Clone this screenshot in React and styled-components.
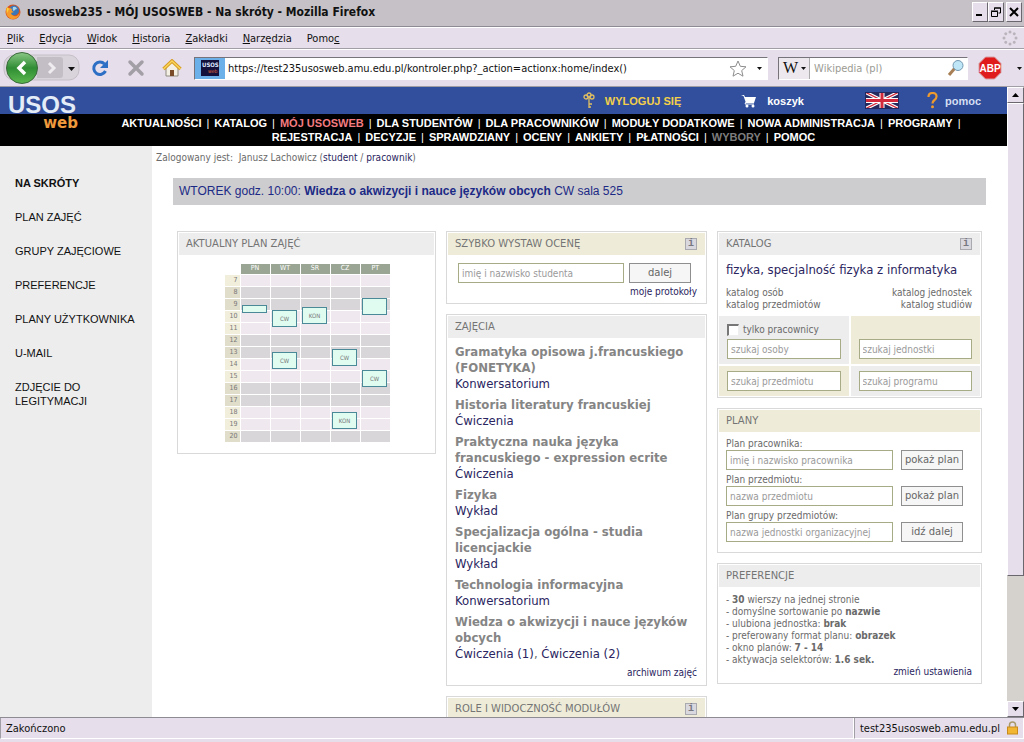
import React from 'react';
import styled, {createGlobalStyle} from 'styled-components';

const __CHROME = '#e6deea';
const __TITLE = '#c5c1c6';
const __BLUE = '#314f9c';
const __LINK = '#2a2560';
const __TEXT = '#6a6a6a';
const __MUTED = '#9a9a9a';
const __GRAY = '#ededed';
const __OLIVE = '#eeecd9';
const __BORDER = '#d9d9d9';
const __UI_FONT = "'DejaVu Sans Condensed', 'DejaVu Sans', sans-serif";
const __PAGE_FONT = "'DejaVu Sans Condensed', 'DejaVu Sans', sans-serif";
const __WIDE_FONT = "'DejaVu Sans', sans-serif";
const __ARIAL = "'Liberation Sans', Arial, sans-serif";

const GlobalStyle = createGlobalStyle`
  * {
    box-sizing: border-box;
  }
  body {
    margin: 0;
    background: #fff;
    font-family: ${__PAGE_FONT};
  }
  button, input {
    font: inherit;
    margin: 0;
  }
  a {
    color: inherit;
    text-decoration: none;
  }
`;

const Window = styled.div`
  display: flex;
  flex-direction: column;
  height: 100vh;
  overflow: hidden;
  background: ${__CHROME};
`;

const TitleBar = styled.header`
  display: flex;
  align-items: center;
  height: 27px;
  padding: 0 2px 2px 5px;
  background: ${__TITLE};
  border-bottom: 1px solid #8f8b92;
`;

const WindowTitle = styled.h1`
  flex: 1;
  margin: 0 0 0 6px;
  font-family: ${__UI_FONT};
  font-size: 12px;
  font-weight: bold;
  color: #111;
`;

const WindowButton = styled.button`
  display: flex;
  align-items: center;
  justify-content: center;
  width: 16px;
  height: 20px;
  padding: 0;
  margin-left: ${props => (props.$apart ? '2px' : 0)};
  background: ${__CHROME};
  border: 1px solid;
  border-color: #fff #6b676e #6b676e #fff;
`;

const MenuBar = styled.nav`
  display: flex;
  align-items: center;
  gap: 15px;
  height: 22px;
  padding: 0 6px 0 7px;
  border-top: 1px solid #fff;
  border-bottom: 1px solid #a29ea6;
  font-family: ${__UI_FONT};
  font-size: 11px;
`;

const MenuItem = styled.button`
  padding: 0;
  border: 0;
  background: none;
  color: #111;
`;

const Throbber = styled.svg`
  margin-left: auto;
`;

const ToolBar = styled.div`
  display: flex;
  align-items: center;
  height: 38px;
  padding: 0 2px 0 3px;
  border-top: 1px solid #fff;
  border-bottom: 1px solid #a29ea6;
  font-family: ${__UI_FONT};
  font-size: 11px;
`;

const ToolButton = styled.button`
  display: flex;
  padding: 0;
  margin-right: ${props => props.$gap || 0}px;
  border: 0;
  background: none;
`;

const Field = styled.div`
  display: flex;
  align-items: center;
  height: 23px;
  background: #fff;
  border: 1px solid;
  border-color: #77737b #fff #fff #77737b;
`;

const AddressField = styled(Field)`
  flex: 1;
  padding-right: 5px;
`;

const SearchField = styled(Field)`
  width: 190px;
  margin: 0 10px;
`;

const SiteIcon = styled.div`
  display: flex;
  flex-direction: column;
  justify-content: center;
  align-items: center;
  width: 30px;
  height: 21px;
  margin-right: 3px;
  background: #6cb0ea;
`;

const FieldInput = styled.input`
  flex: 1;
  min-width: 0;
  padding: 0;
  border: 0;
  outline: 0;
  background: none;
  color: #111;
  &::placeholder {
    color: #9b9b93;
    opacity: 1;
  }
`;

const Engine = styled.button`
  display: flex;
  align-items: center;
  gap: 3px;
  height: 21px;
  padding: 0 3px 0 4px;
  margin-right: 4px;
  border: 0;
  border-right: 1px solid #aaa;
  background: #ece8ee;
  font-family: 'Liberation Serif', serif;
  font-size: 16px;
  color: #111;
`;

const Viewport = styled.div`
  flex: 1;
  min-height: 0;
  display: flex;
`;

const Page = styled.div`
  flex: 1;
  min-width: 0;
  display: flex;
  flex-direction: column;
  overflow: hidden;
  background: #fff;
`;

const SiteHeader = styled.header`
  position: relative;
  font-family: ${__ARIAL};
  font-size: 11px;
  font-weight: bold;
  color: #fff;
`;

const Logo = styled.a`
  position: absolute;
  left: 8px;
  top: 5px;
  display: flex;
  flex-direction: column;
  width: 70px;
`;

const LogoTop = styled.span`
  font-size: 24px;
  line-height: 26px;
  color: #e4ecf8;
`;

const LogoBottom = styled.span`
  align-self: flex-end;
  font-family: ${__WIDE_FONT};
  font-size: 15px;
  line-height: 10px;
  color: #ef9a3c;
`;

const HeaderTop = styled.div`
  display: flex;
  align-items: center;
  justify-content: flex-end;
  height: 27px;
  padding-right: 26px;
  background: ${__BLUE};
`;

const HeaderLink = styled.a`
  display: flex;
  align-items: center;
  gap: ${props => props.$gap || 8}px;
  margin-right: ${props => props.$after || 0}px;
  color: ${props => props.$color || '#fff'};
`;

const SiteNav = styled.nav`
  height: 32px;
  padding: 2px 0 2px 80px;
  background: #000;
`;

const NavRow = styled.ul`
  display: flex;
  justify-content: center;
  margin: 0;
  padding: 0;
  list-style: none;
  line-height: 14px;
  white-space: nowrap;
`;

const NavItem = styled.li`
  color: ${props => props.$color || '#fff'};
  &:not(:last-child)::after,
  &[data-open]::after {
    content: '|';
    padding: 0 5px;
    color: #fff;
    font-weight: normal;
  }
`;

const Body = styled.div`
  flex: 1;
  display: flex;
  min-height: 0;
`;

const SideBar = styled.nav`
  width: 152px;
  flex-shrink: 0;
  padding: 30px 15px;
  background: ${__GRAY};
  font-family: ${__ARIAL};
  font-size: 11px;
  line-height: 14px;
  color: #111;
`;

const SideLink = styled.a`
  display: block;
  margin-bottom: 20px;
  font-weight: ${props => (props.$active ? 'bold' : 'normal')};
`;

const Main = styled.main`
  flex: 1;
  min-width: 0;
  font-size: 10px;
  line-height: 12px;
  color: ${__TEXT};
`;

const LoginInfo = styled.p`
  margin: 0;
  padding: 6px 4px;
  color: ${__TEXT};
`;

const DarkLink = styled.a`
  color: ${__LINK};
`;

const Banner = styled.div`
  margin: 8px 21px 26px;
  padding: 6px;
  background: #cdcdcf;
  font-family: ${__ARIAL};
  font-size: 12px;
  line-height: 15px;
  color: #1c2a86;
`;

const Columns = styled.div`
  display: grid;
  grid-template-columns: 259fr 261fr 265fr;
  gap: 10px;
  align-items: start;
  padding: 0 25px;
`;

const Column = styled.div`
  display: flex;
  flex-direction: column;
  gap: 10px;
`;

const Panel = styled.section`
  padding: 1px;
  border: 1px solid ${__BORDER};
`;

const PanelHead = styled.div`
  display: flex;
  align-items: center;
  justify-content: space-between;
  height: 22px;
  padding: 0 8px 0 7px;
  background: ${props => (props.$olive ? __OLIVE : __GRAY)};
`;

const PanelTitle = styled.h2`
  margin: 0;
  font-family: ${__WIDE_FONT};
  font-size: 10px;
  font-weight: normal;
  color: #747474;
`;

const InfoButton = styled.button`
  width: 12px;
  height: 12px;
  padding: 0;
  border: 1px solid #a9a9b0;
  background: #d8d8de;
  font-family: 'Liberation Mono', monospace;
  font-size: 10px;
  font-weight: bold;
  line-height: 10px;
  color: #77777f;
`;

const PlanWrap = styled.div`
  position: relative;
  width: 165px;
  margin: 9px auto 10px 46px;
`;

const PlanTable = styled.table`
  border-collapse: collapse;
  table-layout: fixed;
  width: 165px;
  font-size: 7px;
  line-height: 9px;
`;

const DayHead = styled.th`
  width: 30px;
  height: 10px;
  padding: 0;
  border-left: 1px solid #fff;
  background: ${props => (props.$empty ? '#fff' : '#9aa594')};
  background-clip: padding-box;
  font-weight: normal;
  color: #fff;
`;

const PlanCorner = styled.td`
  padding: 0;
`;

const HourHead = styled.th`
  height: 12px;
  padding: 0 2px 0 0;
  border-top: 1px solid #fff;
  background: ${props => (props.$dark ? '#e0ddca' : '#f1eedb')};
  font-weight: normal;
  text-align: right;
  color: #777;
`;

const Slot = styled.td`
  padding: 0;
  border-top: 1px solid #fff;
  border-left: 1px solid #fff;
  background: ${props => (props.$dark ? '#d8d6d9' : '#efe9ef')};
`;

const Lesson = styled.span`
  position: absolute;
  display: flex;
  align-items: center;
  justify-content: center;
  width: 25px;
  border: 1px solid #4a8a98;
  background: #e0fbf0;
  font-size: 6px;
  color: #777;
`;

const GradeForm = styled.form`
  display: flex;
  flex-wrap: wrap;
  gap: 3px 5px;
  padding: 8px 8px 4px 10px;
`;

const TextInput = styled.input`
  width: ${props => props.$width || '100%'};
  height: 20px;
  padding: 0 3px;
  border: 1px solid #a8ac86;
  background: #fff;
  color: #555;
  &::placeholder {
    color: ${__MUTED};
    opacity: 1;
  }
`;

const SubmitButton = styled.button`
  width: 62px;
  height: 20px;
  padding: 0;
  border: 1px solid #8f8f8f;
  background: #f6f6f6;
  font-family: ${__WIDE_FONT};
  color: #666;
`;

const RightLink = styled.a`
  display: block;
  width: 100%;
  text-align: right;
  color: ${__LINK};
`;

const Courses = styled.div`
  padding: 6px 8px 5px 7px;
`;

const Course = styled.div`
  margin-bottom: 5px;
  font-size: 13px;
  line-height: 16px;
`;

const CourseName = styled.h3`
  margin: 0;
  font-size: 13px;
  color: #858585;
`;

const Catalog = styled.div`
  display: flex;
  flex-wrap: wrap;
  justify-content: space-between;
  padding: 6px 8px 5px 7px;
`;

const Programme = styled.a`
  width: 100%;
  margin-bottom: 8px;
  font-size: 13px;
  line-height: 18px;
  color: ${__LINK};
`;

const LinkList = styled.div`
  display: flex;
  flex-direction: column;
  text-align: ${props => props.$align || 'left'};
`;

const SearchGrid = styled.div`
  display: grid;
  grid-template-columns: 1fr 1fr;
  gap: 2px;
`;

const SearchCell = styled.div`
  display: flex;
  flex-direction: column;
  justify-content: flex-end;
  padding: 5px 8px;
  background: ${props => (props.$olive ? __OLIVE : __GRAY)};
`;

const CheckLabel = styled.label`
  display: flex;
  align-items: center;
  gap: 4px;
  height: 18px;
`;

const CheckBox = styled.input`
  appearance: none;
  width: 12px;
  height: 12px;
  border: 1px solid;
  border-width: 2px 1px 1px 2px;
  border-color: #777 #eee #eee #777;
  background: #fff;
`;

const Plans = styled.div`
  padding: 6px 17px 5px 7px;
`;

const PlanForm = styled.form`
  display: grid;
  grid-template-columns: 1fr 62px;
  column-gap: 8px;
  margin-bottom: 4px;
`;

const PlanLabel = styled.label`
  grid-column: 1 / -1;
`;

const Prefs = styled.div`
  padding: 7px 8px 4px 7px;
`;

const PrefList = styled.ul`
  margin: 0;
  padding: 0;
  list-style: none;
`;

const ScrollBar = styled.div`
  display: flex;
  flex-direction: column;
  width: 17px;
  flex-shrink: 0;
  background: #d5d1cd;
`;

const ScrollButton = styled.button`
  display: flex;
  align-items: center;
  justify-content: center;
  height: 16px;
  padding: 0;
  border: 1px solid;
  border-color: #fff #6b676e #6b676e #fff;
  background: ${__CHROME};
`;

const ScrollThumb = styled.div`
  flex: 0 0 75%;
  margin-bottom: auto;
  border: 1px solid;
  border-color: #fff #6b676e #6b676e #fff;
  background: ${__CHROME};
`;

const StatusBar = styled.footer`
  display: flex;
  height: 25px;
  border-top: 1px solid #8f8b92;
  font-family: ${__UI_FONT};
  font-size: 11px;
  color: #111;
`;

const StatusCell = styled.div`
  display: flex;
  align-items: center;
  justify-content: space-between;
  flex: ${props => (props.$grow ? 1 : 'none')};
  gap: 7px;
  height: 21px;
  padding: 0 5px;
  border-right: 1px solid #fff;
  border-bottom: 1px solid #fff;
  border-left: 1px solid #a29ea6;
`;

const MENU = [
  ['', 'P', 'lik'],
  ['', 'E', 'dycja'],
  ['', 'W', 'idok'],
  ['', 'H', 'istoria'],
  ['', 'Z', 'akładki'],
  ['', 'N', 'arzędzia'],
  ['Pomo', 'c', '']
];

const NAV = [
  [
    'AKTUALNOŚCI',
    'KATALOG',
    'MÓJ USOSWEB',
    'DLA STUDENTÓW',
    'DLA PRACOWNIKÓW',
    'MODUŁY DODATKOWE',
    'NOWA ADMINISTRACJA',
    'PROGRAMY'
  ],
  [
    'REJESTRACJA',
    'DECYZJE',
    'SPRAWDZIANY',
    'OCENY',
    'ANKIETY',
    'PŁATNOŚCI',
    'WYBORY',
    'POMOC'
  ]
];

const NAV_COLORS = {'MÓJ USOSWEB': '#f47c80', WYBORY: '#7d7d7d'};

const SIDE = [
  'NA SKRÓTY',
  'PLAN ZAJĘĆ',
  'GRUPY ZAJĘCIOWE',
  'PREFERENCJE',
  'PLANY UŻYTKOWNIKA',
  'U-MAIL',
  'ZDJĘCIE DO LEGITYMACJI'
];

const DAYS = ['PN', 'WT', 'ŚR', 'CZ', 'PT'];
const HOURS = [7, 8, 9, 10, 11, 12, 13, 14, 15, 16, 17, 18, 19, 20];
const DARK_HOURS = [8, 9, 12, 13, 16, 17, 20];

// top and height are in pixels of the plan, 12 to an hour
const LESSONS = [
  {day: 0, top: 41, height: 8, name: ''},
  {day: 1, top: 46, height: 17, name: 'CW'},
  {day: 1, top: 88, height: 17, name: 'CW'},
  {day: 2, top: 43, height: 17, name: 'KON'},
  {day: 3, top: 85, height: 17, name: 'CW'},
  {day: 3, top: 148, height: 17, name: 'KON'},
  {day: 4, top: 34, height: 17, name: ''},
  {day: 4, top: 106, height: 17, name: 'CW'}
];

const COURSES = [
  ['Gramatyka opisowa j.francuskiego (FONETYKA)', ['Konwersatorium']],
  ['Historia literatury francuskiej', ['Ćwiczenia']],
  [
    'Praktyczna nauka języka francuskiego - expression ecrite',
    ['Ćwiczenia']
  ],
  ['Fizyka', ['Wykład']],
  ['Specjalizacja ogólna - studia licencjackie', ['Wykład']],
  ['Technologia informacyjna', ['Konwersatorium']],
  [
    'Wiedza o akwizycji i nauce języków obcych',
    ['Ćwiczenia (1)', 'Ćwiczenia (2)']
  ]
];

const PLANS = [
  ['Plan pracownika:', 'imię i nazwisko pracownika', 'pokaż plan'],
  ['Plan przedmiotu:', 'nazwa przedmiotu', 'pokaż plan'],
  ['Plan grupy przedmiotów:', 'nazwa jednostki organizacyjnej', 'idź dalej']
];

const PREFS = [
  ['', '30', ' wierszy na jednej stronie'],
  ['domyślne sortowanie po ', 'nazwie', ''],
  ['ulubiona jednostka: ', 'brak', ''],
  ['preferowany format planu: ', 'obrazek', ''],
  ['okno planów: ', '7 - 14', ''],
  ['aktywacja selektorów: ', '1.6 sek.', '']
];

const Arrow = ({up}) => (
  <svg width="7" height="4" viewBox="0 0 7 4">
    <path d={up ? 'M0 4h7L3.5 0z' : 'M0 0h7L3.5 4z'} fill="#000" />
  </svg>
);

const SmallArrow = () => (
  <svg width="5" height="3" viewBox="0 0 5 3">
    <path d="M0 0h5L2.5 3z" fill="#111" />
  </svg>
);

const FirefoxIcon = () => (
  <svg width="16" height="17" viewBox="0 0 16 17">
    <circle cx="8" cy="8" r="7.5" fill="#d9541e" />
    <circle cx="9" cy="6.5" r="5" fill="#3a76b8" />
    <path d="M8 3q3-1 4 2q-2 0-3 2q-2-1-1-4z" fill="#a8d4ee" />
    <path
      d="M1 4q-1 8 5 11q8 1 9-7q-2 5-6 4q-3-1-3-3l3-1q-3-1-2-3q-3-2-6-1z"
      fill="#f59a2b"
    />
    <path d="M2 3l2 2l-2 4z" fill="#fbd23c" />
  </svg>
);

const BackForwardIcon = () => (
  <svg width="77" height="34" viewBox="0 0 77 34">
    <defs>
      <linearGradient id="back" x1="0" y1="0" x2="0" y2="1">
        <stop offset="0" stopColor="#8cc887" />
        <stop offset="0.5" stopColor="#2f8d34" />
        <stop offset="1" stopColor="#5cb84e" />
      </linearGradient>
    </defs>
    <rect
      x="1"
      y="4"
      width="75"
      height="25"
      rx="10"
      fill="#d9d4db"
      stroke="#c5c0c8"
    />
    <path d="M34 6h23q3 0 3 3v15q0 3-3 3H34z" fill="#c3bec6" />
    <path
      d="M46 12l5 5l-5 5"
      fill="none"
      stroke="#efecf0"
      strokeWidth="3"
    />
    <circle cx="19" cy="17" r="15.5" fill="url(#back)" stroke="#3c6b3c" />
    <path
      d="M22 11l-6 6l6 6"
      fill="none"
      stroke="#fff"
      strokeWidth="3.5"
    />
    <path d="M65 16h7l-3.5 4z" fill="#111" />
  </svg>
);

const ReloadIcon = () => (
  <svg width="18" height="18" viewBox="0 0 18 18">
    <path
      d="M13.5 5A6.200 6.200 0 1 0 14.500 12"
      fill="none"
      stroke="#2c6fc4"
      strokeWidth="3"
    />
    <path d="M17 1v8H9z" fill="#2c6fc4" />
  </svg>
);

const StopIcon = () => (
  <svg width="18" height="18" viewBox="0 0 18 18">
    <path
      d="M3 3l12 12M15 3L3 15"
      stroke="#a39fa6"
      strokeWidth="3.5"
      strokeLinecap="round"
    />
  </svg>
);

const HomeIcon = () => (
  <svg width="20" height="18" viewBox="0 0 20 18">
    <path d="M4 9v8h12V9l-6-6z" fill="#f4f0e4" stroke="#8f8a80" />
    <path
      d="M1.5 10L10 2l8.5 8"
      fill="none"
      stroke="#d79b22"
      strokeWidth="3.5"
    />
    <path
      d="M1.5 10L10 2l8.5 8"
      fill="none"
      stroke="#f8d75c"
      strokeWidth="1.5"
    />
    <rect x="8" y="11" width="4" height="6" fill="#7a4b2a" />
  </svg>
);

const SiteLogoIcon = () => (
  <svg width="18" height="16" viewBox="0 0 18 16">
    <rect width="18" height="16" fill="#14123c" />
    <text x="1" y="7" fontSize="6" fontWeight="bold" fill="#dfe6ff">
      USOS
    </text>
    <text x="7" y="13" fontSize="5" fill="#e2683a">
      web
    </text>
  </svg>
);

const StarIcon = () => (
  <svg width="18" height="17" viewBox="0 0 18 17">
    <path
      d="M9 1l2.3 5.3l5.7.5l-4.3 3.8l1.3 5.6L9 13.2l-5 3l1.3-5.6L1 6.8l5.7-.5z"
      fill="#fff"
      stroke="#8d8d8d"
    />
  </svg>
);

const LensIcon = () => (
  <svg width="18" height="18" viewBox="0 0 18 18">
    <path d="M2 16l6-7" stroke="#a87f55" strokeWidth="3" />
    <circle cx="11" cy="6.5" r="5" fill="#bfe6f6" stroke="#7397b0" />
  </svg>
);

const AbpIcon = () => (
  <svg width="24" height="24" viewBox="0 0 24 24">
    <path
      d="M7.5 1h9L23 7.5v9L16.5 23h-9L1 16.5v-9z"
      fill="#e01b1b"
      stroke="#d8a0a4"
    />
    <text
      x="12"
      y="16"
      fontFamily="Liberation Sans"
      fontSize="10"
      fontWeight="bold"
      textAnchor="middle"
      fill="#fff"
    >
      ABP
    </text>
  </svg>
);

const KeyIcon = () => (
  <svg width="12" height="17" viewBox="0 0 12 17">
    <g fill="none" stroke="#e0bd62" strokeWidth="1.3">
      <circle cx="3" cy="5" r="2" />
      <circle cx="9" cy="5" r="2" />
      <circle cx="6" cy="3" r="2" />
      <path d="M6 5v11M6 12h3M6 15h2" />
    </g>
  </svg>
);

const CartIcon = () => (
  <svg width="16" height="14" viewBox="0 0 16 14">
    <path d="M0 1h3l1 2h11l-2 6H5L2.5 2z" fill="#fff" />
    <path d="M5 8l-1 2h9" fill="none" stroke="#fff" />
    <circle cx="6" cy="12" r="1.5" fill="#fff" />
    <circle cx="12" cy="12" r="1.5" fill="#fff" />
  </svg>
);

const FlagIcon = () => (
  <svg width="34" height="17" viewBox="0 0 34 17">
    <rect width="34" height="17" fill="#252a5e" />
    <path d="M0 0l34 17M34 0L0 17" stroke="#fff" strokeWidth="3.5" />
    <path d="M0 0l34 17M34 0L0 17" stroke="#d22a3c" strokeWidth="1.2" />
    <path d="M17 0v17M0 8.5h34" stroke="#fff" strokeWidth="5" />
    <path d="M17 0v17M0 8.5h34" stroke="#d22a3c" strokeWidth="3" />
    <rect
      x="0.5"
      y="0.5"
      width="33"
      height="16"
      fill="none"
      stroke="#252a5e"
    />
  </svg>
);

const HelpIcon = () => (
  <svg width="11" height="17" viewBox="0 0 11 17">
    <path
      d="M1.5 5q0-4 4-4t4 3.500q0 2-2 3.500t-2 3.500"
      fill="none"
      stroke="#ef9a2c"
      strokeWidth="2.2"
    />
    <circle cx="5.5" cy="14.8" r="1.5" fill="#ef9a2c" />
  </svg>
);

const LockIcon = () => (
  <svg width="11" height="14" viewBox="0 0 11 14">
    <path
      d="M2.5 7V4q0-3 3-3t3 3v3"
      fill="none"
      stroke="#a99a6c"
      strokeWidth="1.5"
    />
    <rect x="0.5" y="6" width="10" height="7" fill="#f2b632" stroke="#c98a1c" />
  </svg>
);

const LoadingDots = () => (
  <Throbber width="16" height="16" viewBox="0 0 16 16">
    {[0, 45, 90, 135, 180, 225, 270, 315].map(angle => (
      <circle
        key={angle}
        cx="8"
        cy="2"
        r="1.5"
        fill="#b9b4bc"
        transform={`rotate(${angle} 8 8)`}
      />
    ))}
  </Throbber>
);

const Plan = () => (
  <PlanWrap>
    <PlanTable>
      <thead>
        <tr>
          <PlanCorner />
          {DAYS.map(day => (
            <DayHead key={day}>{day}</DayHead>
          ))}
        </tr>
      </thead>
      <tbody>
        {HOURS.map(hour => {
          const dark = DARK_HOURS.includes(hour);
          return (
            <tr key={hour}>
              <HourHead $dark={dark}>{hour}</HourHead>
              {DAYS.map(day => (
                <Slot key={day} $dark={dark} />
              ))}
            </tr>
          );
        })}
      </tbody>
    </PlanTable>
    {LESSONS.map((lesson, index) => (
      <Lesson
        key={index}
        style={{
          left: 17 + lesson.day * 30,
          top: lesson.top,
          height: lesson.height
        }}
      >
        {lesson.name}
      </Lesson>
    ))}
  </PlanWrap>
);

const Head = ({title, olive, info}) => (
  <PanelHead $olive={olive}>
    <PanelTitle>{title}</PanelTitle>
    {info && <InfoButton type="button">i</InfoButton>}
  </PanelHead>
);

class App extends React.Component {
  renderChrome() {
    return (
      <>
        <TitleBar>
          <FirefoxIcon />
          <WindowTitle>
            usosweb235 - MÓJ USOSWEB - Na skróty - Mozilla Firefox
          </WindowTitle>
          <WindowButton aria-label="Minimalizuj">
            <svg width="10" height="10" viewBox="0 0 10 10">
              <path d="M1 8h6" stroke="#000" strokeWidth="2" />
            </svg>
          </WindowButton>
          <WindowButton aria-label="Przywróć">
            <svg width="10" height="10" viewBox="0 0 10 10">
              <path
                d="M3.5 3V1h6v5h-2M3 1h7M0.5 4.5h6v5h-6zM0 4h7"
                fill="none"
                stroke="#000"
              />
            </svg>
          </WindowButton>
          <WindowButton $apart aria-label="Zamknij">
            <svg width="10" height="10" viewBox="0 0 10 10">
              <path d="M1 1l8 8M9 1L1 9" stroke="#000" strokeWidth="2" />
            </svg>
          </WindowButton>
        </TitleBar>
        <MenuBar>
          {MENU.map(([before, key, after]) => (
            <MenuItem key={before + key + after}>
              {before}
              <u>{key}</u>
              {after}
            </MenuItem>
          ))}
          <LoadingDots />
        </MenuBar>
        <ToolBar>
          <ToolButton $gap={11} aria-label="Wstecz">
            <BackForwardIcon />
          </ToolButton>
          <ToolButton $gap={18} aria-label="Odśwież">
            <ReloadIcon />
          </ToolButton>
          <ToolButton $gap={17} aria-label="Zatrzymaj">
            <StopIcon />
          </ToolButton>
          <ToolButton $gap={12} aria-label="Start">
            <HomeIcon />
          </ToolButton>
          <AddressField>
            <SiteIcon>
              <SiteLogoIcon />
            </SiteIcon>
            <FieldInput
              aria-label="Adres"
              defaultValue="https://test235usosweb.amu.edu.pl/kontroler.php?_action=actionx:home/index()"
            />
            <ToolButton $gap={10} aria-label="Dodaj zakładkę">
              <StarIcon />
            </ToolButton>
            <SmallArrow />
          </AddressField>
          <SearchField>
            <Engine aria-label="Wyszukiwarka">
              W <SmallArrow />
            </Engine>
            <FieldInput aria-label="Szukaj" placeholder="Wikipedia (pl)" />
            <ToolButton $gap={2} aria-label="Szukaj">
              <LensIcon />
            </ToolButton>
          </SearchField>
          <ToolButton $gap={15} aria-label="Adblock Plus">
            <AbpIcon />
          </ToolButton>
          <SmallArrow />
        </ToolBar>
      </>
    );
  }

  renderSiteHeader() {
    return (
      <SiteHeader>
        <HeaderTop>
          <HeaderLink href="#wyloguj" $color="#f4cf4a" $gap={10} $after={60}>
            <KeyIcon />
            WYLOGUJ SIĘ
          </HeaderLink>
          <HeaderLink href="#koszyk" $gap={10} $after={61}>
            <CartIcon />
            koszyk
          </HeaderLink>
          <HeaderLink href="#en" aria-label="English" $after={28}>
            <FlagIcon />
          </HeaderLink>
          <HeaderLink href="#pomoc" $color="#d5def2" $gap={7}>
            <HelpIcon />
            pomoc
          </HeaderLink>
        </HeaderTop>
        <SiteNav>
          {NAV.map((row, index) => (
            <NavRow key={index}>
              {row.map(name => (
                <NavItem
                  key={name}
                  $color={NAV_COLORS[name]}
                  data-open={name === 'PROGRAMY' ? '' : undefined}
                >
                  <a href="#nav">{name}</a>
                </NavItem>
              ))}
            </NavRow>
          ))}
        </SiteNav>
        <Logo href="#usos">
          <LogoTop>USOS</LogoTop>
          <LogoBottom>web</LogoBottom>
        </Logo>
      </SiteHeader>
    );
  }

  render() {
    return (
      <Window>
        <GlobalStyle />
        {this.renderChrome()}
        <Viewport>
          <Page>
            {this.renderSiteHeader()}
            <Body>
              <SideBar>
                {SIDE.map((name, index) => (
                  <SideLink key={name} href="#side" $active={index === 0}>
                    {name}
                  </SideLink>
                ))}
              </SideBar>
              <Main>
                <LoginInfo>
                  Zalogowany jest: &nbsp;Janusz Lachowicz (
                  <DarkLink href="#student">student</DarkLink> /{' '}
                  <DarkLink href="#pracownik">pracownik</DarkLink>)
                </LoginInfo>
                <Banner>
                  WTOREK godz. 10:00:{' '}
                  <b>Wiedza o akwizycji i nauce języków obcych</b> CW sala 525
                </Banner>
                <Columns>
                  <Panel>
                    <Head title="AKTUALNY PLAN ZAJĘĆ" />
                    <Plan />
                  </Panel>
                  <Column>
                    <Panel>
                      <Head title="SZYBKO WYSTAW OCENĘ" olive info />
                      <GradeForm>
                        <TextInput
                          $width="166px"
                          aria-label="Student"
                          placeholder="imię i nazwisko studenta"
                        />
                        <SubmitButton type="button">dalej</SubmitButton>
                        <RightLink href="#protokoly">moje protokoły</RightLink>
                      </GradeForm>
                    </Panel>
                    <Panel>
                      <Head title="ZAJĘCIA" />
                      <Courses>
                        {COURSES.map(([name, groups]) => (
                          <Course key={name}>
                            <CourseName>{name}</CourseName>
                            {groups.map((group, index) => (
                              <React.Fragment key={group}>
                                {index > 0 && ', '}
                                <DarkLink href="#grupa">{group}</DarkLink>
                              </React.Fragment>
                            ))}
                          </Course>
                        ))}
                        <RightLink href="#archiwum">archiwum zajęć</RightLink>
                      </Courses>
                    </Panel>
                    <Panel>
                      <Head title="ROLE I WIDOCZNOŚĆ MODUŁÓW" olive info />
                    </Panel>
                  </Column>
                  <Column>
                    <Panel>
                      <Head title="KATALOG" info />
                      <Catalog>
                        <Programme href="#program">
                          fizyka, specjalność fizyka z informatyka
                        </Programme>
                        <LinkList>
                          <a href="#osoby">katalog osób</a>
                          <a href="#przedmioty">katalog przedmiotów</a>
                        </LinkList>
                        <LinkList $align="right">
                          <a href="#jednostki">katalog jednostek</a>
                          <a href="#studia">katalog studiów</a>
                        </LinkList>
                      </Catalog>
                      <SearchGrid>
                        <SearchCell>
                          <CheckLabel>
                            <CheckBox type="checkbox" />
                            tylko pracownicy
                          </CheckLabel>
                          <TextInput
                            aria-label="Osoba"
                            placeholder="szukaj osoby"
                          />
                        </SearchCell>
                        <SearchCell $olive>
                          <TextInput
                            aria-label="Jednostka"
                            placeholder="szukaj jednostki"
                          />
                        </SearchCell>
                        <SearchCell $olive>
                          <TextInput
                            aria-label="Przedmiot"
                            placeholder="szukaj przedmiotu"
                          />
                        </SearchCell>
                        <SearchCell>
                          <TextInput
                            aria-label="Program"
                            placeholder="szukaj programu"
                          />
                        </SearchCell>
                      </SearchGrid>
                    </Panel>
                    <Panel>
                      <Head title="PLANY" olive />
                      <Plans>
                        {PLANS.map(([label, placeholder, action], index) => (
                          <PlanForm key={label}>
                            <PlanLabel htmlFor={`plan-${index}`}>
                              {label}
                            </PlanLabel>
                            <TextInput
                              id={`plan-${index}`}
                              placeholder={placeholder}
                            />
                            <SubmitButton type="button">{action}</SubmitButton>
                          </PlanForm>
                        ))}
                      </Plans>
                    </Panel>
                    <Panel>
                      <Head title="PREFERENCJE" />
                      <Prefs>
                        <PrefList>
                          {PREFS.map(([before, value, after]) => (
                            <li key={value}>
                              - {before}
                              <b>{value}</b>
                              {after}
                            </li>
                          ))}
                        </PrefList>
                        <RightLink href="#preferencje">
                          zmień ustawienia
                        </RightLink>
                      </Prefs>
                    </Panel>
                  </Column>
                </Columns>
              </Main>
            </Body>
          </Page>
          <ScrollBar>
            <ScrollButton aria-label="W górę">
              <Arrow up />
            </ScrollButton>
            <ScrollThumb />
            <ScrollButton aria-label="W dół">
              <Arrow />
            </ScrollButton>
          </ScrollBar>
        </Viewport>
        <StatusBar>
          <StatusCell $grow>Zakończono</StatusCell>
          <StatusCell>
            test235usosweb.amu.edu.pl
            <LockIcon />
          </StatusCell>
        </StatusBar>
      </Window>
    );
  }
}

export default App;
